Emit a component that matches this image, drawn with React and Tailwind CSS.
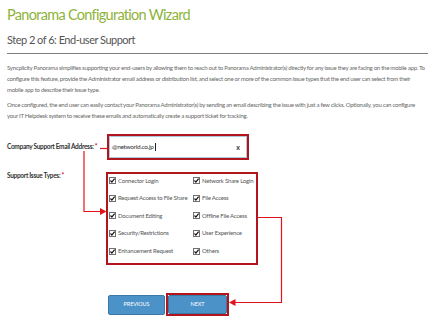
import React from "react";

const issues = [
  ["Connector Login", "Network Share Login"],
  ["Request Access to File Share", "File Access"],
  ["Document Editing", "Offline File Access"],
  ["Security/Restrictions", "User Experience"],
  ["Enhancement Request", "Others"],
];

const Check = () => (
  <svg width="7" height="7" viewBox="0 0 7 7" className="shrink-0">
    <rect x="0.5" y="0.5" width="6" height="6" fill="#fff" stroke="#707070" />
    <path d="M1.5 3.5 L2.9 5.1 L5.6 1.6" fill="none" stroke="#111" strokeWidth="1.2" />
  </svg>
);

const Issue = ({ label }) => (
  <label className="flex h-[8px] items-center gap-[2px] text-[6px] leading-[8px] tracking-[-0.2px] text-[#555]">
    <Check />
    <span>{label}</span>
  </label>
);

export default function App() {
  return (
    <div className="relative h-[334px] w-[438px] overflow-hidden bg-white pl-[7px] pr-[10px] font-['Lato','Liberation_Sans',sans-serif]">
      <h1 className="pt-[6px] text-[14.5px] leading-[18px] tracking-[-0.7px] text-[#8db33a]">
        Panorama Configuration Wizard
      </h1>
      <h2 className="mt-[9px] border-b border-[#7f7f7f] pb-[6px] text-[11px] leading-[14px] tracking-[-0.5px] text-[#555]">
        Step 2 of 6: End-user Support
      </h2>

      <div className="mt-[7.5px] whitespace-nowrap text-[6.1px] leading-[11px] tracking-[-0.3px] text-[#6a6a6a]">
        <p>
          Syncplicity Panorama simplifies supporting your end-users by allowing them to reach out to Panorama Administrator(s) directly for any issue they are facing on the mobile app. To
          <br />
          configure this feature, provide the Administrator email address or distribution list, and select one or more of the common issue types that the end user can select from their
          <br />
          mobile app to describe their issue type.
        </p>
        <p className="mt-[4px]">
          Once configured, the end user can easily contact your Panorama Administrator(s) by sending an email describing the issue with just a few clicks. Optionally, you can configure
          <br />
          your IT Helpdesk system to receive these emails and automatically create a support ticket for tracking.
        </p>
      </div>

      <div className="mt-[13.5px] grid grid-cols-[99px_auto] items-center">
        <span className="text-[6.5px] font-bold leading-[8px] tracking-[-0.3px] text-[#333]">
          Company Support Email Address: <span className="text-[#d0021b]">*</span>
        </span>
        <div className="ml-[1px] w-[142px] border-2 border-[#b3151c]">
          <div className="flex h-[22px] items-center justify-between border border-[#a9c9dc] bg-white pl-[2px] pr-[6px]">
            <span className="flex items-center text-[6.5px] tracking-[-0.3px] text-[#333]">
              @networld.co.jp
              <span className="ml-[1px] inline-block h-[8px] border-l border-[#222]" />
            </span>
            <span className="text-[7px] font-bold text-[#333]">x</span>
          </div>
        </div>

        <span className="mt-[12px] self-start text-[6.5px] font-bold leading-[8px] tracking-[-0.3px] text-[#333]">
          Support Issue Types: <span className="text-[#d0021b]">*</span>
        </span>
        <div className="mt-[12px] w-[152px] border-2 border-[#b3151c] pb-[8px] pl-[1px] pt-[2.5px]">
          <div className="grid grid-cols-[84px_auto] gap-y-[9.65px]">
            {issues.map(([a, b]) => (
              <React.Fragment key={a}>
                <Issue label={a} />
                <Issue label={b} />
              </React.Fragment>
            ))}
          </div>
        </div>

        <span />
        <div className="ml-[2px] mt-[28px] flex items-center">
          <button className="h-[20px] w-[57px] rounded-[2px] border border-[#3a78a8] bg-[#4b92c8] text-[5.5px] tracking-[-0.1px] text-white">
            PREVIOUS
          </button>
          <div className="ml-[1px] border-2 border-[#b3151c]">
            <button className="block h-[19px] w-[59px] rounded-[2px] border border-[#3a78a8] bg-[#4b92c8] text-[5.5px] tracking-[-0.1px] text-white">
              NEXT
            </button>
          </div>
        </div>
      </div>

      <svg className="pointer-events-none absolute left-0 top-0" width="438" height="334" viewBox="0 0 438 334">
        <g fill="none" stroke="#e1141c" strokeWidth="1.2">
          <path d="M107 148.5 H100" />
          <path d="M84 151 V211.5 H101" />
          <path d="M258 217.5 H281.5 V302.5 H235" />
        </g>
        <path d="M106.5 211.5 L100 208 L100 215 Z" fill="#e1141c" />
        <path d="M229 302.5 L235.5 299 L235.5 306 Z" fill="#e1141c" />
      </svg>
    </div>
  );
}
